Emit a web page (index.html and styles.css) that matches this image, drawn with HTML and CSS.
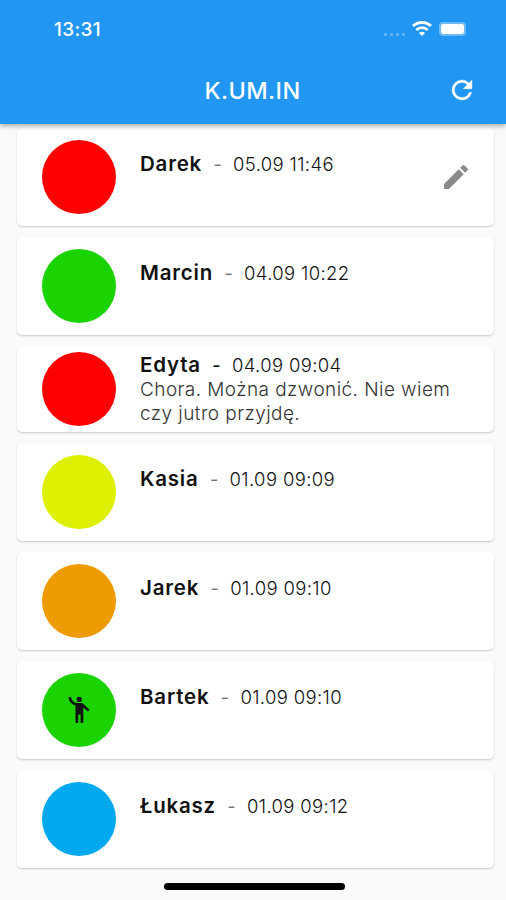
FILE: index.html
```html
<!DOCTYPE html>
<html lang="pl">
<head>
    <meta charset="UTF-8">
    <meta name="viewport" content="width=device-width, initial-scale=1.0">
    <title>K.UM.IN</title>
    <link rel="stylesheet" href="styles.css">
</head>
<body>
    <header class="app-header">
        <div class="status-bar">
            <span class="clock">13:31</span>
            <div class="status-icons">
                <span class="signal"><i></i><i></i><i></i><i></i></span>
                <svg class="wifi" width="20" height="16" viewBox="0 0 20 16" fill="none" stroke="#fff" stroke-width="2.8">
                    <path d="M1 5.1a13 13 0 0 1 18 0"></path>
                    <path d="M4.3 8.9a8.2 8.2 0 0 1 11.4 0"></path>
                    <path d="M10 15 7 12a4.2 4.2 0 0 1 6 0z" fill="#fff" stroke="none"></path>
                </svg>
                <span class="battery"></span>
            </div>
        </div>
        <div class="toolbar">
            <h1>K.UM.IN</h1>
            <svg class="refresh" width="30" height="30" viewBox="0 0 24 24" fill="#fff" stroke="#fff" stroke-width="0.3">
                <path d="M17.65 6.35A7.958 7.958 0 0 0 12 4a8 8 0 1 0 7.73 10h-2.08A5.99 5.99 0 0 1 12 18c-3.31 0-6-2.69-6-6s2.69-6 6-6c1.66 0 3.14.69 4.22 1.78L13 11h7V4l-2.35 2.35z"></path>
            </svg>
        </div>
    </header>

    <main class="list">
        <div class="card">
            <div class="avatar red"></div>
            <div class="info">
                <p class="title"><b>Darek</b><span class="dash">-</span><time>05.09 11:46</time></p>
            </div>
            <svg class="edit" width="32" height="32" viewBox="0 0 24 24" fill="#8a8a8a">
                <path d="M3 17.25V21h3.75L17.81 9.94l-3.75-3.75L3 17.25zM20.71 7.04a1 1 0 0 0 0-1.41l-2.34-2.34a1 1 0 0 0-1.41 0l-1.83 1.83 3.75 3.75 1.83-1.83z"></path>
            </svg>
        </div>
        <div class="card">
            <div class="avatar green"></div>
            <div class="info">
                <p class="title"><b>Marcin</b><span class="dash">-</span><time>04.09 10:22</time></p>
            </div>
        </div>
        <div class="card compact">
            <div class="avatar red"></div>
            <div class="info">
                <p class="title"><b>Edyta</b><span class="dash strong">-</span><time>04.09 09:04</time></p>
                <p class="note">Chora. Można dzwonić. Nie wiem czy jutro przyjdę.</p>
            </div>
        </div>
        <div class="card">
            <div class="avatar yellow"></div>
            <div class="info">
                <p class="title"><b>Kasia</b><span class="dash">-</span><time>01.09 09:09</time></p>
            </div>
        </div>
        <div class="card">
            <div class="avatar orange"></div>
            <div class="info">
                <p class="title"><b>Jarek</b><span class="dash">-</span><time>01.09 09:10</time></p>
            </div>
        </div>
        <div class="card">
            <div class="avatar green">
                <!-- waving person -->
                <svg width="22" height="28" viewBox="0 0 22 28" fill="#111">
                    <circle cx="11.2" cy="3.4" r="2.6"></circle>
                    <path d="M.4 1.2 3 .7C3.5 4.2 5.6 6.7 9 7h4c1.2 0 2 .4 2.8 1.2l5.8 5.6-1.7 1.7-4.6-4V27h-2.7v-8.5h-2.4V27H7.5V9.7C3.5 8.3 1 5.4.4 1.2z"></path>
                </svg>
            </div>
            <div class="info">
                <p class="title"><b>Bartek</b><span class="dash">-</span><time>01.09 09:10</time></p>
            </div>
        </div>
        <div class="card">
            <div class="avatar blue"></div>
            <div class="info">
                <p class="title"><b>Łukasz</b><span class="dash">-</span><time>01.09 09:12</time></p>
            </div>
        </div>
    </main>

    <div class="home-indicator"></div>
</body>
</html>
```
FILE: styles.css
```css
* {
    box-sizing: border-box;
}

body {
    margin: 0;
    height: 900px;
    display: flex;
    flex-direction: column;
    background: #fafafa;
    font-family: Inter, "Liberation Sans", sans-serif;
    color: #111;
    overflow: hidden;
}

h1,
p {
    margin: 0;
}

.app-header {
    position: relative; /* keeps the shadow above the list */
    z-index: 1;
    flex: none;
    height: 124px;
    background: #2196f3;
    color: #fff;
    box-shadow: 0 2px 5px rgba(0, 0, 0, 0.32);
}

.status-bar {
    height: 57px;
    padding: 0 40px 0 54px;
    display: flex;
    align-items: center;
    justify-content: space-between;
}

.clock {
    padding-top: 1px;
    font-size: 19px;
    font-weight: 500;
    letter-spacing: 0.35px;
}

.status-icons {
    display: flex;
    align-items: center;
}

.signal {
    display: flex;
    gap: 3px;
    margin: 11px 7px 0 0;
}

.signal i {
    width: 3px;
    height: 3px;
    border-radius: 1px;
    background: rgba(255, 255, 255, 0.3);
}

.battery {
    width: 27px;
    height: 14px;
    margin-left: 7px;
    border: 2px solid rgba(255, 255, 255, 0.35);
    border-radius: 4px;
    background: #fff;
    background-clip: padding-box;
}

.toolbar {
    height: 66px;
    padding: 0 29px 0 30px;
    display: flex;
    align-items: center;
}

h1 {
    flex: 1;
    padding-left: 28px;
    text-align: center;
    font-size: 23.5px;
    font-weight: 500;
    letter-spacing: 0.4px;
}

.list {
    display: flex;
    flex-direction: column;
    gap: 11px;
    padding: 4px 12px 0 17px;
}

.card {
    height: 98px;
    padding: 0 22px 0 25px;
    display: flex;
    align-items: center;
    background: #fff;
    border-radius: 5px;
    box-shadow: 0 1px 2px rgba(0, 0, 0, 0.2);
}

.card.compact {
    height: 86px;
}

.avatar {
    flex: none;
    width: 74px;
    height: 74px;
    margin-right: 24px;
    display: flex;
    align-items: center;
    justify-content: center;
    border-radius: 50%;
}

.red { background: #ff0000; }
.green { background: #1bd300; }
.yellow { background: #ddf000; }
.orange { background: #ee9b00; }
.blue { background: #00a8ee; }

.info {
    flex: 1;
    min-height: 50px;
    line-height: 24px;
}

.compact .info {
    min-height: 73px;
}

.title {
    display: flex;
    align-items: baseline;
    white-space: nowrap;
}

.title b {
    font-size: 20.5px;
    font-weight: 600;
    letter-spacing: 0.8px;
}

.dash {
    width: 31px;
    text-align: center;
    font-size: 18px;
    color: #777;
}

.dash.strong {
    color: #111;
    font-weight: 500;
}

time {
    font-size: 18.5px;
    font-weight: 300;
    letter-spacing: 0.35px;
}

.note {
    font-size: 19px;
    font-weight: 300;
    letter-spacing: 0.43px;
    color: #333;
}

.home-indicator {
    width: 181px;
    height: 7px;
    margin: 15px 0 0 164px;
    border-radius: 4px;
    background: #000;
}
```
